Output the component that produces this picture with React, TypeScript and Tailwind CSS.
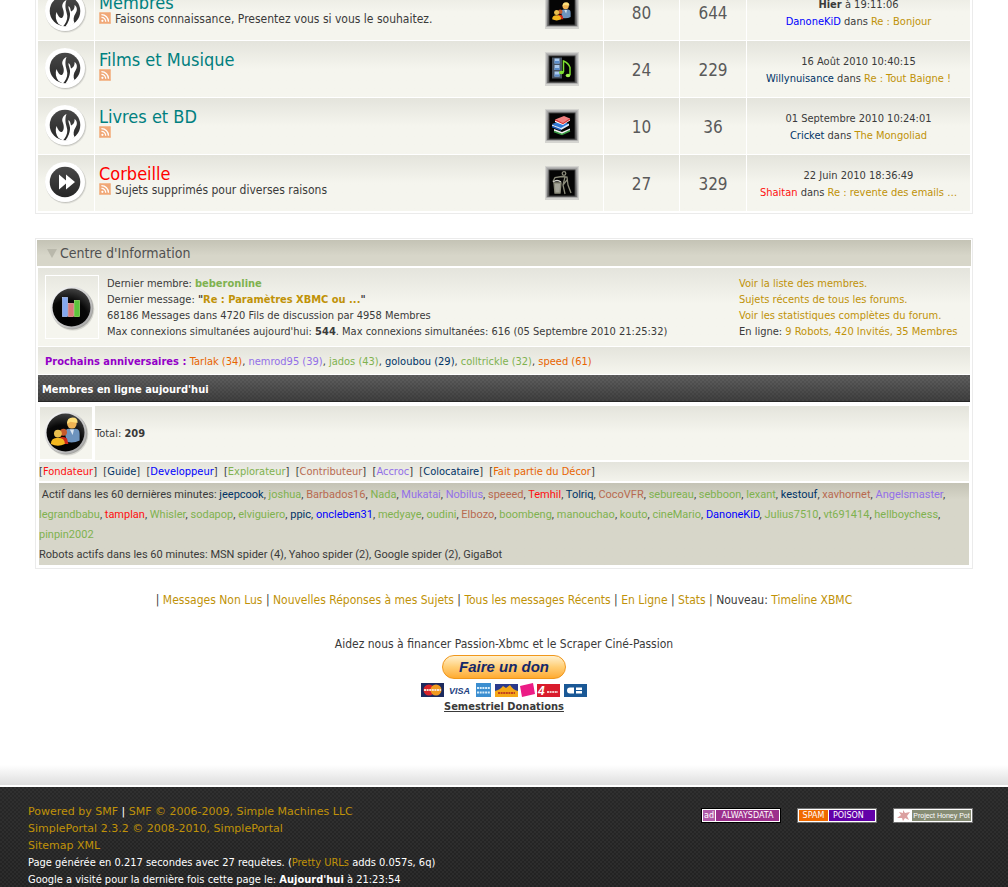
import React from "react";

const names: Record<string, string> = {
  navy: "text-[#003366]",
  blue: "text-[#0000ff]",
  red: "text-[#ff1010]",
  green: "text-[#7fb24f]",
  purple: "text-[#9370e8]",
  brown: "text-[#b86a50]",
  orange: "text-[#e86400]",
  gold: "text-[#c09208]",
};

function A({ c = "gold", className = "", children }: { c?: string; className?: string; children: React.ReactNode }) {
  return (
    <a href="#" className={`${names[c]} ${className}`}>
      {children}
    </a>
  );
}

function Rss() {
  return (
    <svg viewBox="0 0 12 12" className="inline-block h-3 w-3 shrink-0">
      <rect width="12" height="12" rx="1.5" fill="#f0a878" />
      <rect x="0.5" y="0.5" width="11" height="11" rx="1" fill="none" stroke="#f3bd95" />
      <circle cx="3.4" cy="8.8" r="1.1" fill="#fff" />
      <path d="M2.4 5.4a4.2 4.2 0 0 1 4.3 4.4M2.4 2.6a7 7 0 0 1 7.1 7.2" fill="none" stroke="#fff" strokeWidth="1.3" />
    </svg>
  );
}

function Disc({ children }: { children: React.ReactNode }) {
  return (
    <svg viewBox="1 1 44 46" className="block h-[46px] w-11">
      <defs>
        <linearGradient id="disc" x1="0" y1="0" x2="0" y2="1">
          <stop offset="0" stopColor="#484848" />
          <stop offset="1" stopColor="#262626" />
        </linearGradient>
      </defs>
      <circle cx="22.9" cy="24.2" r="20.6" fill="#000" opacity="0.08" />
      <circle cx="22.5" cy="23.7" r="20.2" fill="#000" opacity="0.12" />
      <circle cx="22" cy="23" r="20" fill="#fff" />
      <circle cx="22" cy="23" r="15.3" fill="url(#disc)" />
      {children}
    </svg>
  );
}

function Flame() {
  return (
    <Disc>
      <path
        d="M23.500 12C19.500 14 18.500 17.500 19.800 20.500C21 23.500 21.500 27.500 19 30C17 30.500 15 28 13.500 24C12 28 12.800 32.500 15.500 36L20 38.500C22.500 36 24.500 32 24.300 28C24 24 20.800 19 23.500 12ZM25.500 18C28 20 27.300 22.500 28.300 23.500C30 22.500 32 20.500 31.500 17C34.500 19 34.500 22.500 32.500 25.500C30.500 28.500 30 32 31.500 35C29 38 26 38.800 22.500 38.500C25 35 27.300 30 27 25.500C26.800 22.500 25 20.500 25.500 18Z"
        fill="#fff"
      />
    </Disc>
  );
}

function Forward() {
  return (
    <Disc>
      <path d="M16 15.500L23 21.500V15.500L32 23L23 30.500V24.500L16 30.500Z" fill="#fff" />
    </Disc>
  );
}

function People() {
  return (
    <g>
      <path d="M13.500 14q0-3.500 3-3.500h4.500q3 0 3 3.500v5q-4 2-9 1z" fill="#6d93bd" />
      <path d="M17 11h3l-1 4z" fill="#d8e4f0" />
      <circle cx="18.500" cy="7" r="3.400" fill="#f0b454" />
      <path d="M15 7q0-4.500 4-4.500t3.500 4l-5-1z" fill="#ffdf7a" />
      <circle cx="12.500" cy="13" r="2.500" fill="#c65a2c" />
      <path d="M9.500 17.500q2-2 5.500 0l1 4h-6.500z" fill="#d02818" />
      <circle cx="8.500" cy="14" r="2.800" fill="#eabf4e" />
      <path d="M3.500 21.500q0-4.500 5-4.500t5 4.500q-5 2.500-10 0z" fill="#f3b71f" />
    </g>
  );
}

function Tile({ kind }: { kind: string }) {
  return (
    <svg viewBox="0 0 34 34" className="block h-[34px] w-[34px]">
      <defs>
        <linearGradient id="frame" x1="0" y1="0" x2="0" y2="1">
          <stop offset="0" stopColor="#a8a8a8" />
          <stop offset="0.5" stopColor="#8c8c8c" />
          <stop offset="1" stopColor="#707070" />
        </linearGradient>
      </defs>
      <rect width="34" height="34" fill="#d4d4d0" />
      <rect x="1.500" y="1.500" width="31" height="30" fill="url(#frame)" stroke="#b6b6b6" strokeWidth="0.600" />
      <rect x="3.500" y="3.500" width="27" height="27" fill="#3a3a3a" />
      <rect x="4.500" y="4.500" width="25" height="25" fill="#050505" />
      {kind === "people" && <g transform="translate(4 5) scale(0.900)"><People /></g>}
      {kind === "music" && (
        <g>
          <rect x="7" y="5.500" width="10" height="21" fill="#475260" />
          <path d="M9.500 6.500h5v5h-5zM9.500 13h5v5h-5zM9.500 19.500h5v5h-5z" fill="#a9c9ee" />
          <path d="M9.500 9h5v2.500h-5zM9.500 16h5v2h-5zM9.500 22.500h5v2h-5z" fill="#5b8cc8" />
          <path d="M18.500 20V9q5 2 6.500 6.500V23" fill="none" stroke="#7ee030" strokeWidth="1.500" />
          <ellipse cx="16.500" cy="20.500" rx="2.500" ry="1.700" fill="#7ee030" />
          <ellipse cx="23" cy="23.500" rx="2.300" ry="1.700" fill="#a0f050" />
        </g>
      )}
      {kind === "books" && (
        <g>
          <path d="M9 20l8 3 8-3.500v2l-8 4-8-3.500z" fill="#f3f3f3" />
          <path d="M9 22.500l8 3 8-3.800" fill="none" stroke="#3a9d43" strokeWidth="1.500" />
          <path d="M7 15l9-3 8 3-8 5z" fill="#2f7ad8" />
          <path d="M7 15.500v2l9 3.500 8-4.500v-2l-8 4.500z" fill="#dfe9f8" />
          <path d="M7 17.500l9 3.500" stroke="#1e5cb8" strokeWidth="1.500" />
          <path d="M10 10.500l9-3.500 6 2.500-7 5z" fill="#f08080" />
          <path d="M10 11v2l8 3 7-4.500v-2l-7 4.500z" fill="#fff" />
          <path d="M10 11l8 3.500 7-4.500" fill="none" stroke="#dd3030" strokeWidth="1.200" />
        </g>
      )}
      {kind === "bin" && (
        <g fill="none" stroke="#8b8b7a" strokeWidth="1.300">
          <circle cx="19" cy="7.500" r="1.800" />
          <path d="M17 10.500l5 .5 1 8 3 8M20 11l-2 8 2 9M17 10.500l-7 1-2 4M22 14l-4 5" />
          <path d="M9 17h7l-1 10h-5z" fill="#a5a59a" />
          <path d="M8 16q4-3 8 0" stroke="#d0d0c8" />
        </g>
      )}
    </svg>
  );
}

function Badge({ kind }: { kind: string }) {
  return (
    <svg viewBox="0 0 46 48" className="block h-12 w-[46px] shrink-0">
      <defs>
        <linearGradient id="ring" x1="0" y1="0" x2="1" y2="1">
          <stop offset="0" stopColor="#fff" />
          <stop offset="1" stopColor="#a0a0a0" />
        </linearGradient>
        <radialGradient id="ball" cx="0.400" cy="0.850" r="0.900">
          <stop offset="0" stopColor="#000" />
          <stop offset="0.600" stopColor="#080808" />
          <stop offset="1" stopColor="#484848" />
        </radialGradient>
      </defs>
      <circle cx="24" cy="25.200" r="21.300" fill="#000" opacity="0.120" />
      <circle cx="23.300" cy="24.400" r="21" fill="#000" opacity="0.220" />
      <circle cx="22.500" cy="23.500" r="21" fill="url(#ring)" />
      <circle cx="22.500" cy="23.500" r="19" fill="url(#ball)" />
      {kind === "stats" ? (
        <g>
          <rect x="13.500" y="13.500" width="5" height="19" fill="#84a8f0" stroke="#b4ccff" strokeWidth="0.700" />
          <rect x="19.500" y="19.500" width="5" height="13" fill="#d87878" stroke="#ffb0b0" strokeWidth="0.700" />
          <rect x="25.500" y="16.500" width="5" height="16" fill="#5cc43c" stroke="#a0f070" strokeWidth="0.700" />
        </g>
      ) : (
        <g transform="translate(3 5) scale(1.400)"><People /></g>
      )}
    </svg>
  );
}

type Board = {
  title: string;
  red?: boolean;
  desc?: string;
  tile: string;
  topics: number;
  posts: number;
  when: React.ReactNode;
  who: string;
  whoColor: string;
  last: string;
};

const boards: Board[] = [
  { title: "Membres", desc: "Faisons connaissance, Presentez vous si vous le souhaitez.", tile: "people", topics: 80, posts: 644, when: <><b>Hier</b> à 19:11:06</>, who: "DanoneKiD", whoColor: "blue", last: "Re : Bonjour" },
  { title: "Films et Musique", tile: "music", topics: 24, posts: 229, when: "16 Août 2010 10:40:15", who: "Willynuisance", whoColor: "navy", last: "Re : Tout Baigne !" },
  { title: "Livres et BD", tile: "books", topics: 10, posts: 36, when: "01 Septembre 2010 10:24:01", who: "Cricket", whoColor: "navy", last: "The Mongoliad" },
  { title: "Corbeille", red: true, desc: "Sujets supprimés pour diverses raisons", tile: "bin", topics: 27, posts: 329, when: "22 Juin 2010 18:36:49", who: "Shaitan", whoColor: "red", last: "Re : revente des emails …" },
];

const cell = "bg-linear-to-b from-[#e4e4dc] to-[#f5f5ee] to-50%";

type Person = [string, string];

const birthdays: Person[] = [
  ["Tarlak (34)", "orange"], ["nemrod95 (39)", "purple"], ["jados (43)", "green"],
  ["goloubou (29)", "navy"], ["colltrickle (32)", "green"], ["speed (61)", "orange"],
];

const groups: Person[] = [
  ["Fondateur", "red"], ["Guide", "navy"], ["Developpeur", "blue"], ["Explorateur", "green"],
  ["Contributeur", "brown"], ["Accroc", "purple"], ["Colocataire", "navy"], ["Fait partie du Décor", "orange"],
];

const active: Person[] = [
  ["jeepcook", "navy"], ["joshua", "green"], ["Barbados16", "brown"], ["Nada", "green"], ["Mukatai", "purple"],
  ["Nobilus", "purple"], ["speeed", "brown"], ["Temhil", "red"], ["Tolriq", "navy"], ["CocoVFR", "brown"],
  ["sebureau", "green"], ["sebboon", "green"], ["lexant", "green"], ["kestouf", "navy"], ["xavhornet", "brown"],
  ["Angelsmaster", "purple"], ["legrandbabu", "green"], ["tamplan", "red"], ["Whisler", "green"], ["sodapop", "green"],
  ["elviguiero", "green"], ["ppic", "navy"], ["oncleben31", "blue"], ["medyaye", "green"], ["oudini", "green"],
  ["Elbozo", "brown"], ["boombeng", "green"], ["manouchao", "green"], ["kouto", "green"], ["cineMario", "green"],
  ["DanoneKiD", "blue"], ["Julius7510", "green"], ["vt691414", "green"], ["hellboychess", "green"], ["pinpin2002", "green"],
];

function NameList({ list }: { list: Person[] }) {
  return (
    <>
      {list.map(([name, c], i) => (
        <React.Fragment key={name}>
          {i > 0 && ", "}
          <A c={c}>{name}</A>
        </React.Fragment>
      ))}
    </>
  );
}

const quick = ["Messages Non Lus", "Nouvelles Réponses à mes Sujets", "Tous les messages Récents", "En Ligne", "Stats"];

function Cards() {
  return (
    <svg viewBox="0 0 166 14" className="block h-3.5 w-[166px]">
      <rect width="23" height="14" fill="#1c2a5e" />
      <circle cx="8" cy="7" r="5.500" fill="#d8232a" />
      <circle cx="15" cy="7" r="5.500" fill="#f19a1f" />
      <path d="M3 7h17" stroke="#f8e0d0" strokeWidth="2" strokeDasharray="2 0.600" />
      <text x="38.500" y="11" fontSize="9" fontWeight="bold" fontStyle="italic" textAnchor="middle" fill="#1d3f80" fontFamily="Liberation Sans">VISA</text>
      <rect x="55" width="15" height="14" fill="#3b8ed0" />
      <path d="M56 5h13M56 9.500h13" stroke="#d6ecfa" strokeWidth="2" strokeDasharray="2 0.700" />
      <rect x="74" y="1" width="23" height="13" fill="#2b3a8c" />
      <path d="M74 8q5-1 8-5l3 2 4-3q3 5 8 6v6H74z" fill="#f4a818" />
      <path d="M77 10h17" stroke="#b02020" strokeWidth="1.500" strokeDasharray="2 0.600" />
      <path d="M99 3l13-3 2 11-13 3z" fill="#ec1c86" />
      <rect x="116" y="1" width="23" height="13" fill="#d91c2c" />
      <text x="117" y="12" fontSize="12" fontWeight="bold" fontStyle="italic" fill="#fff" fontFamily="Liberation Sans">4</text>
      <path d="M126 9h11" stroke="#f4c8c8" strokeWidth="2" strokeDasharray="2 0.600" />
      <rect x="143" y="1" width="23" height="13" fill="#1a5896" />
      <path d="M153 4.500h-4a3 3 0 0 0 0 6h4zM155 4.500h6v2.500h-6zM155 8h6v2.500h-6z" fill="#fff" />
    </svg>
  );
}

export default function App() {
  return (
    <div className="flex min-h-screen flex-col overflow-hidden bg-white font-['DejaVu_Sans_Condensed','DejaVu_Sans',sans-serif] text-[11px] text-[#3a3a3a]">
      <main className="-mt-[19px] flex flex-col">
        <section className="mx-[35px] border border-[#ebebeb] p-px">
          <table className="w-full table-fixed border-separate border-spacing-px">
            <colgroup>
              <col className="w-14" />
              <col />
              <col className="w-[82px]" />
              <col className="w-[75px]" />
              <col className="w-[66px]" />
              <col className="w-[223px]" />
            </colgroup>
            <tbody>
              {boards.map((b) => (
                <tr key={b.title} className="h-14">
                  <td className={`${cell} p-0`}>
                    <div className="flex justify-center">{b.tile === "bin" ? <Forward /> : <Flame />}</div>
                  </td>
                  <td colSpan={2} className={`${cell} p-0`}>
                    <div className="flex items-center justify-between pl-1 pr-6">
                      <div className="flex flex-col pb-1">
                        <a href="#" className={b.red ? "text-lg leading-[18px] text-[#ff0000]" : "text-lg leading-[18px] text-[#008080]"}>{b.title}</a>
                        <div className="flex h-3.5 items-start gap-1 text-xs leading-3.5">
                          <Rss />
                          <span>{b.desc}</span>
                        </div>
                      </div>
                      <Tile kind={b.tile} />
                    </div>
                  </td>
                  <td className={`${cell} p-0 pt-1 text-center text-[17px] text-[#5a5a5a]`}>{b.topics}</td>
                  <td className={`${cell} p-0 pt-1 text-center text-[17px] text-[#5a5a5a]`}>{b.posts}</td>
                  <td className={`${cell} p-0 pt-0.5 text-center leading-[17px]`}>
                    {b.when}
                    <br />
                    <A c={b.whoColor}>{b.who}</A> dans <A>{b.last}</A>
                  </td>
                </tr>
              ))}
            </tbody>
          </table>
        </section>

        <section className="mx-[35px] mt-6 border border-[#ebebeb] p-px pb-[3px]">
          <h2 className="flex h-[26px] items-center gap-[3px] bg-linear-to-b from-[#c4c3b5] to-[#d7d6c9] to-60% pl-2.5 text-sm text-[#505050]">
            <svg viewBox="0 0 10 9" className="h-[9px] w-2.5"><path d="M0 0h10L5 9z" fill="#b9b8ab" /></svg>
            Centre d'Information
          </h2>
          <div className="px-px pt-0.5">
            <div className="flex h-[78px] bg-linear-to-b from-[#e4e4dc] to-[#f5f5ee] to-45% pl-[7px] pt-[7px]">
              <div className="flex h-16 w-[54px] items-center justify-center border border-white pt-px"><Badge kind="stats" /></div>
              <div className="flex-1 pl-2 pt-px leading-4">
                <p>Dernier membre: <A c="green" className="font-bold">beberonline</A></p>
                <p>Dernier message: <b>"<A>Re : Paramètres XBMC ou ...</A>"</b></p>
                <p>68186 Messages dans 4720 Fils de discussion par 4958 Membres</p>
                <p>Max connexions simultanées aujourd'hui: <b>544</b>. Max connexions simultanées: 616 (05 Septembre 2010 21:25:32)</p>
              </div>
              <div className="w-[231px] pt-px leading-4">
                <p><A>Voir la liste des membres.</A></p>
                <p><A>Sujets récents de tous les forums.</A></p>
                <p><A>Voir les statistiques complètes du forum.</A></p>
                <p>En ligne: <A>9 Robots, 420 Invités, 35 Membres</A></p>
              </div>
            </div>
            <p className="mt-px h-[27px] bg-linear-to-b from-[#e4e4dc] to-[#f5f5ee] pl-[7px] pt-px leading-7">
              <b className="text-[#9400c8]">Prochains anniversaires : </b>
              <NameList list={birthdays} />
            </p>
            <h3 className="mt-px h-[27px] border-b border-[#262626] bg-[image:repeating-conic-gradient(#00000018_0_25%,transparent_0_50%),linear-gradient(#606060,#404040)] bg-[length:4px_4px,100%_100%] pl-1 pt-px font-bold leading-7 text-white">
              Membres en ligne aujourd'hui
            </h3>
            <div className="px-px pt-1">
              <div className="flex h-[54px] items-stretch gap-[3px] pl-px">
                <div className="my-px flex w-[52px] items-center justify-center bg-linear-to-b from-[#e4e4dc] to-[#f5f5ee] to-50%"><Badge kind="people" /></div>
                <div className="flex flex-1 items-center bg-linear-to-b from-[#e4e4dc] to-[#f5f5ee] to-50% pt-0.5">
                  <span>Total: <b>209</b></span>
                </div>
              </div>
              <p className="mt-0.5 h-[19px] bg-linear-to-b from-[#e4e4dc] to-[#f3f3ec] leading-5">
                {groups.map(([g, c], i) => (
                  <React.Fragment key={g}>
                    {i > 0 && "\u00a0 "}[<A c={c}>{g}</A>]
                  </React.Fragment>
                ))}
              </p>
              <div className="mt-0.5 bg-linear-to-b from-[#c4c3b5] to-[#d7d6c9] to-20% pt-0.5 font-[Roboto,sans-serif] leading-5">
                <p>&nbsp;Actif dans les 60 dernières minutes: <NameList list={active} /></p>
                <p>Robots actifs dans les 60 minutes: MSN spider (4), Yahoo spider (2), Google spider (2), GigaBot</p>
              </div>
            </div>
          </div>
        </section>

        <nav className="mt-[22px] text-center text-xs leading-[18px]">
          {quick.map((q) => (
            <React.Fragment key={q}>| <A>{q}</A> </React.Fragment>
          ))}
          | Nouveau: <A>Timeline XBMC</A>
        </nav>
        <div className="mt-6 flex flex-col items-center pt-px">
          <p className="text-xs leading-5">Aidez nous à financer Passion-Xbmc et le Scraper Ciné-Passion</p>
          <button className="mt-px h-6 w-[124px] rounded-full border border-[#f0971c] bg-linear-to-b from-[#fff0cc] via-[#ffce74] to-[#ffab2e] font-['Liberation_Sans',sans-serif] text-[15px] font-bold italic leading-5 text-[#14286a]">
            Faire un don
          </button>
          <div className="mt-1"><Cards /></div>
          <a href="#" className="mt-0.5 font-bold leading-4 underline">Semestriel Donations</a>
        </div>
        <div className="mt-[50px] h-5 bg-linear-to-b from-white to-[#dedede]" />
      </main>

      <footer className="mt-0.5 flex flex-1 justify-between bg-[image:repeating-conic-gradient(#ffffff0a_0_25%,transparent_0_50%),linear-gradient(#282828,#222222)] bg-[length:4px_4px,100%_100%] pl-7 pr-[35px] pt-4 text-white">
        <div className="leading-[17px]">
          <p className="font-['DejaVu_Sans',sans-serif]"><A>Powered by SMF</A> | <A>SMF © 2006-2009, Simple Machines LLC</A></p>
          <p className="font-['DejaVu_Sans',sans-serif]"><A>SimplePortal 2.3.2 © 2008-2010, SimplePortal</A></p>
          <p className="font-['DejaVu_Sans',sans-serif]"><A>Sitemap XML</A></p>
          <p>Page générée en 0.217 secondes avec 27 requêtes. (<A>Pretty URLs</A> adds 0.057s, 6q)</p>
          <p>Google a visité pour la dernière fois cette page le: <b>Aujourd'hui</b> à 21:23:54</p>
        </div>
        <div className="flex gap-4 pt-[5px] font-['DejaVu_Sans',sans-serif] text-[8px] leading-[11px]">
          <a href="#" className="flex h-[15px] w-20 border border-black bg-white p-px">
            <span className="w-3 bg-[#b05aa8] text-center">ad</span>
            <span className="ml-px flex-1 bg-[#9c2f8c] text-center">ALWAYSDATA</span>
          </a>
          <a href="#" className="flex h-[15px] w-20 border border-[#707070] bg-white p-px">
            <span className="w-[29px] bg-[#f06a00] text-center">SPAM</span>
            <span className="ml-px flex-1 bg-[#6200a8] pl-1">POISON</span>
          </a>
          <a href="#" className="flex h-[15px] w-20 border border-[#707070] bg-white p-px">
            <svg viewBox="0 0 17 11" className="h-[11px] w-[17px] shrink-0"><path d="M8 0l2 3 5-1-3 4 2 4-4-2-2 3-1-3-5 0 4-3-2-3 4 1z" fill="#dba0a0" /></svg>
            <span className="flex-1 whitespace-nowrap bg-[#868c74] text-center font-['Liberation_Sans',sans-serif] text-[7px]">Project Honey Pot</span>
          </a>
        </div>
      </footer>
    </div>
  );
}
